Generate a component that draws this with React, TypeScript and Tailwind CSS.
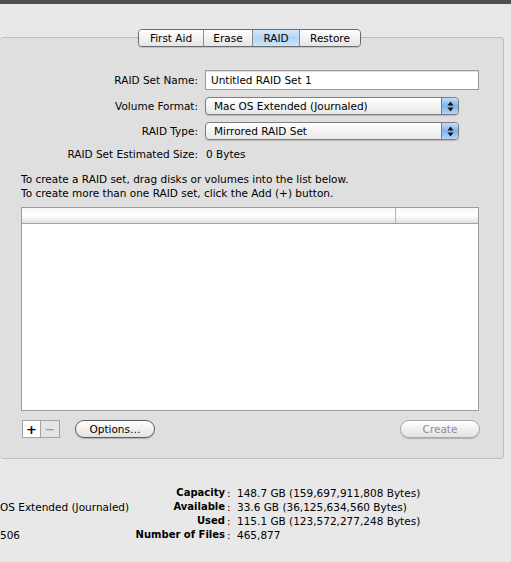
import React from "react";

function Tab({ label, active, last }: { label: string; active?: boolean; last?: boolean }) {
  return (
    <div
      className={`flex h-full items-center justify-center ${last ? "" : "border-r border-[#8c8c8c]"} ${
        active
          ? "bg-linear-to-b from-[#d5e8fb] via-[#b3d3f5] to-[#cfe5fb]"
          : "bg-linear-to-b from-white to-[#e4e4e4]"
      }`}
    >
      {label}
    </div>
  );
}

function Stepper() {
  return (
    <span className="flex w-[17px] items-center justify-center rounded-r-[4px] border-l border-[#5d7fb5] bg-linear-to-b from-[#c4ddf7] via-[#7fb3ec] to-[#b2d6f9]">
      <svg width="7" height="11" viewBox="0 0 7 11">
        <path d="M3.5 0.5 L6.5 4.5 L0.5 4.5 Z" fill="#111" />
        <path d="M0.5 6.5 L6.5 6.5 L3.5 10.5 Z" fill="#111" />
      </svg>
    </span>
  );
}

function Popup({ value }: { value: string }) {
  return (
    <div className="flex h-[18px] w-[254px] rounded-[4px] border border-[#7d7d7d] bg-linear-to-b from-white to-[#e8e8e8] shadow-[0_1px_1px_rgba(0,0,0,0.18)]">
      <span className="flex-1 pl-[8px] leading-[16px]">{value}</span>
      <Stepper />
    </div>
  );
}

function Row({ label, children }: { label: string; children: React.ReactNode }) {
  return (
    <div className="flex items-center gap-[7px]">
      <span className="w-[198px] text-right">{label}</span>
      {children}
    </div>
  );
}

function PillButton({ label, disabled, width }: { label: string; disabled?: boolean; width: string }) {
  return (
    <button
      className={`h-[18px] ${width} rounded-full border bg-linear-to-b from-white to-[#e2e2e2] leading-[16px] shadow-[0_1px_1px_rgba(0,0,0,0.2)] ${
        disabled ? "border-[#a9a9a9] text-[#8e8e8e]" : "border-[#5e5e5e] text-black"
      }`}
    >
      {label}
    </button>
  );
}

function InfoRow({ left, label, value }: { left?: string; label: string; value: string }) {
  return (
    <div className="flex h-[14px] items-center leading-[14px]">
      <span className="w-[130px] whitespace-nowrap">{left}</span>
      <span className="w-[95px] text-right text-[10px] font-bold">{label}</span>
      <span className="w-[12px] pl-[2px]">:</span>
      <span>{value}</span>
    </div>
  );
}

export default function App() {
  return (
    <div className="h-[562px] w-[511px] overflow-hidden bg-[#e8e8e8] font-['DejaVu_Sans',sans-serif] text-[10.5px] leading-[14px] text-black">
      <div className="h-[4px] bg-[#4f4f4f]" />

      <div className="mt-[33px] w-[504px] rounded-[4px] border border-l-0 border-[#bdbdbd] bg-[#dfdfdf] pb-[20px]">
        <div className="-mt-[9px] ml-[138px] grid h-[18px] w-[223px] grid-cols-[65px_49px_47px_1fr] overflow-hidden rounded-[4px] border border-[#6b6b6b] shadow-[0_1px_1px_rgba(0,0,0,0.15)]">
          <Tab label="First Aid" />
          <Tab label="Erase" />
          <Tab label="RAID" active />
          <Tab label="Restore" last />
        </div>

        <div className="mt-[23px] flex flex-col gap-[7px]">
          <Row label="RAID Set Name:">
            <div className="h-[20px] w-[274px] border border-[#9b9b9b] bg-white pl-[5px] leading-[18px] shadow-[inset_0_1px_1px_rgba(0,0,0,0.15)]">
              Untitled RAID Set 1
            </div>
          </Row>
          <Row label="Volume Format:">
            <Popup value="Mac OS Extended (Journaled)" />
          </Row>
          <Row label="RAID Type:">
            <Popup value="Mirrored RAID Set" />
          </Row>
          <Row label="RAID Set Estimated Size:">
            <span className="h-[14px] pl-[1px]">0 Bytes</span>
          </Row>
        </div>

        <div className="mt-[11px] pl-[21px]">
          <p>To create a RAID set, drag disks or volumes into the list below.</p>
          <p>To create more than one RAID set, click the Add (+) button.</p>
        </div>

        <div className="mt-[7px] ml-[21px] h-[204px] w-[458px] border border-[#9c9c9c] bg-white">
          <div className="flex h-[16px] border-b border-[#a3a3a3] bg-linear-to-b from-[#f6f6f6] via-white to-[#e0e0e0]">
            <div className="w-[374px] border-r border-[#b3b3b3]" />
            <div className="flex-1" />
          </div>
        </div>

        <div className="mt-[9px] ml-[22px] mr-[23px] flex items-center">
          <div className="flex h-[18px] border border-[#a3a3a3]">
            <span className="flex w-[18px] items-center justify-center border-r border-[#a3a3a3] bg-white text-[13px] font-bold leading-none">
              +
            </span>
            <span className="flex w-[18px] items-center justify-center bg-[#e4e4e4] text-[13px] leading-none text-[#8a8a8a]">
              −
            </span>
          </div>
          <div className="ml-[15px]">
            <PillButton label="Options…" width="w-[80px]" />
          </div>
          <div className="ml-auto">
            <PillButton label="Create" width="w-[80px]" disabled />
          </div>
        </div>
      </div>

      <div className="mt-[27px]">
        <InfoRow label="Capacity" value="148.7 GB (159,697,911,808 Bytes)" />
        <InfoRow left="OS Extended (Journaled)" label="Available" value="33.6 GB (36,125,634,560 Bytes)" />
        <InfoRow label="Used" value="115.1 GB (123,572,277,248 Bytes)" />
        <InfoRow left="506" label="Number of Files" value="465,877" />
      </div>
    </div>
  );
}
